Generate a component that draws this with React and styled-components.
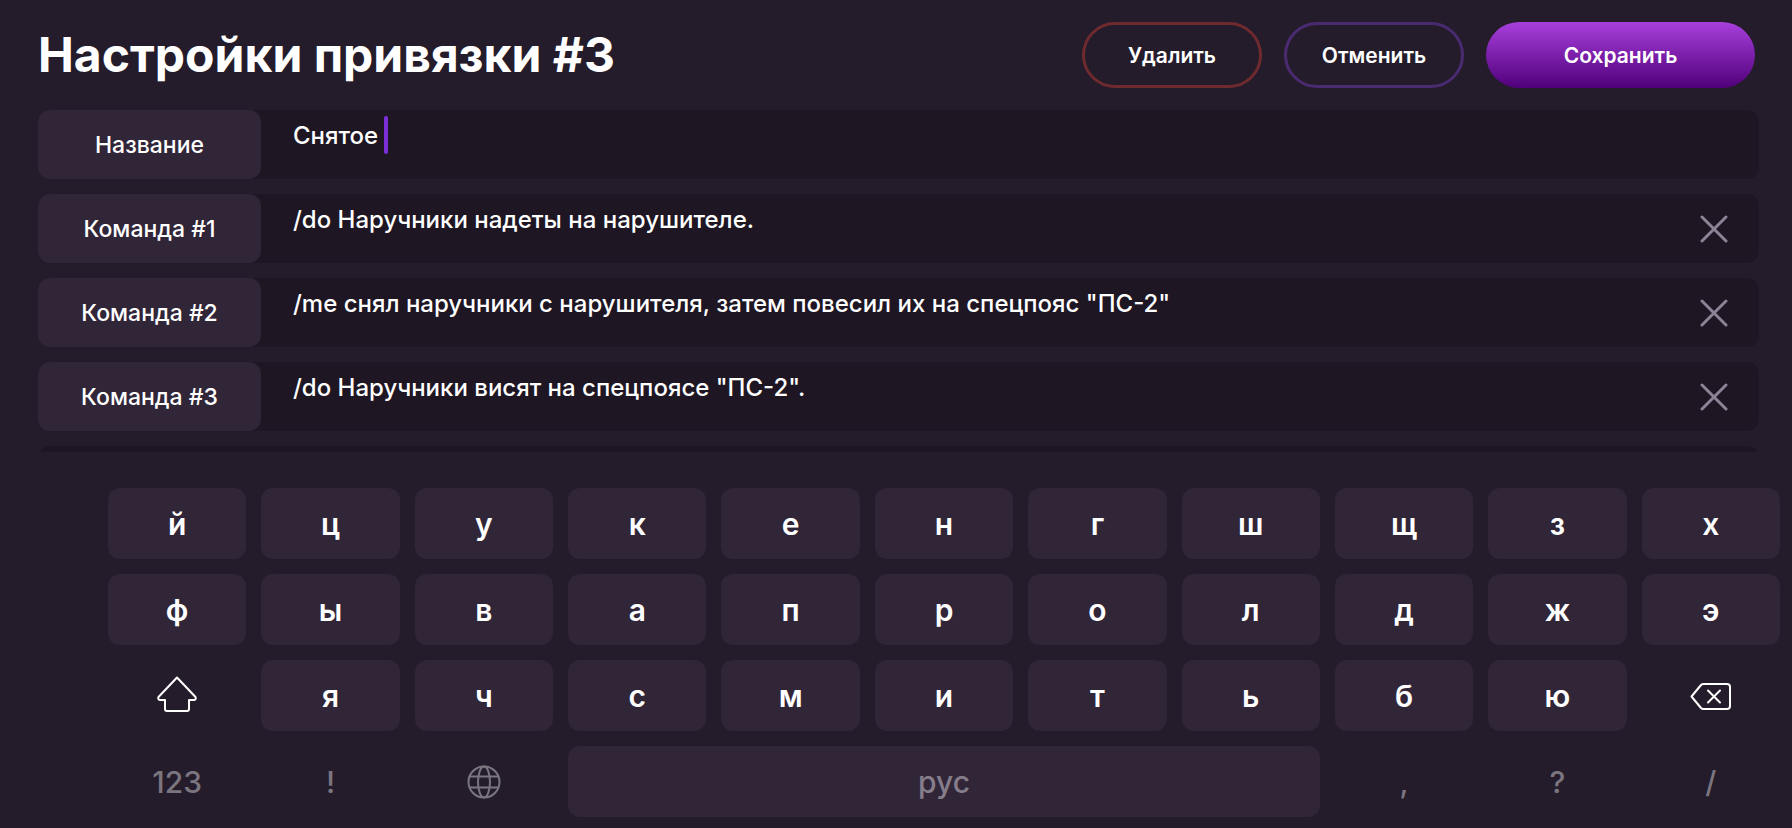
import { useState } from "react";
import styled, { createGlobalStyle } from "styled-components";

const fields = [
  { id: "name", label: "Название", value: "Снятое", active: true },
  { id: "command-1", label: "Команда #1", value: "/do Наручники надеты на нарушителе." },
  {
    id: "command-2",
    label: "Команда #2",
    value: '/me снял наручники с нарушителя, затем повесил их на спецпояс "ПС-2"',
  },
  { id: "command-3", label: "Команда #3", value: '/do Наручники висят на спецпоясе "ПС-2".' },
];

const letterRows = ["йцукенгшщзх", "фывапролджэ"];
const lastLetterRow = "ячсмитьбю";

const CloseIcon = () => (
  <svg width="28" height="28" viewBox="0 0 28 28" fill="none" stroke="currentColor" strokeWidth="3" strokeLinecap="round">
    <path d="M2 2 26 26M26 2 2 26" />
  </svg>
);

const ShiftIcon = () => (
  <svg width="40" height="40" viewBox="0 0 40 40" fill="none" stroke="currentColor" strokeWidth="2" strokeLinejoin="round">
    <path d="M20 1.500 1.500 21Q0.500 24 3.500 24H8V33Q8 35 10 35H30Q32 35 32 33V24H36.500Q39.500 24 38.500 21Z" />
  </svg>
);

const BackspaceIcon = () => (
  <svg width="42" height="28" viewBox="0 0 42 28" fill="none" stroke="currentColor" strokeWidth="2" strokeLinecap="round" strokeLinejoin="round">
    <path d="M13.500 2H37Q40 2 40 5V24Q40 27 37 27H13.500Q12 27 11 26L1.500 14.500 11 3Q12 2 13.500 2Z" />
    <path d="M18 8.500 30 20.500M30 8.500 18 20.500" />
  </svg>
);

const GlobeIcon = () => (
  <svg width="34" height="34" viewBox="0 0 34 34" fill="none" stroke="currentColor" strokeWidth="2">
    <circle cx="17" cy="17" r="15.500" />
    <ellipse cx="17" cy="17" rx="6" ry="15.500" />
    <path d="M3 11.500H31M3 22.500H31" />
  </svg>
);

const App = () => {
  const [values, setValues] = useState(fields.map((field) => field.value));

  const change = (index, value) =>
    setValues(values.map((item, i) => (i === index ? value : item)));

  return (
    <Page>
      <GlobalStyle />
      <Header>
        <Title>Настройки привязки #3</Title>
        <Actions>
          <OutlineButton type="button" $color="#6f2a30">
            Удалить
          </OutlineButton>
          <OutlineButton type="button" $color="#4a2a70">
            Отменить
          </OutlineButton>
          <SaveButton type="button">Сохранить</SaveButton>
        </Actions>
      </Header>

      <FieldList>
        {fields.map((field, index) => (
          <Field key={field.id}>
            <FieldLabel htmlFor={field.id}>{field.label}</FieldLabel>
            <FieldBody>
              <FieldInput
                id={field.id}
                type="text"
                value={values[index]}
                $active={field.active}
                onChange={(e) => change(index, e.target.value)}
              />
              {field.active && <Caret />}
            </FieldBody>
            {!field.active && (
              <RemoveButton type="button" aria-label="Удалить команду">
                <CloseIcon />
              </RemoveButton>
            )}
          </Field>
        ))}
        <Field />
      </FieldList>

      <Keyboard>
        {letterRows.map((row) =>
          [...row].map((letter) => (
            <Key type="button" key={letter}>
              {letter}
            </Key>
          ))
        )}
        <BareKey type="button" aria-label="Shift">
          <ShiftIcon />
        </BareKey>
        {[...lastLetterRow].map((letter) => (
          <Key type="button" key={letter}>
            {letter}
          </Key>
        ))}
        <BareKey type="button" aria-label="Backspace">
          <BackspaceIcon />
        </BareKey>
        <BareKey type="button" $muted>
          123
        </BareKey>
        <BareKey type="button" $muted>
          !
        </BareKey>
        <BareKey type="button" $muted aria-label="Язык">
          <GlobeIcon />
        </BareKey>
        <SpaceKey type="button">рус</SpaceKey>
        <BareKey type="button" $muted>
          ,
        </BareKey>
        <BareKey type="button" $muted>
          ?
        </BareKey>
        <BareKey type="button" $muted>
          /
        </BareKey>
      </Keyboard>
    </Page>
  );
};

export default App;

const GlobalStyle = createGlobalStyle`
  * {
    box-sizing: border-box;
    margin: 0;
    padding: 0;
  }
  body {
    background: #241c2a;
    color: #fff;
    font-family: Inter, "Open Sans", sans-serif;
  }
  button,
  input {
    border: none;
    background: none;
    color: inherit;
    font-family: inherit;
  }
  button {
    cursor: pointer;
  }
  svg {
    display: block;
  }
`;

const Page = styled.div`
  padding-bottom: 12px;
`;

const Header = styled.header`
  display: flex;
  align-items: center;
  justify-content: space-between;
  padding: 22px 37px 22px 38px;
`;

const Title = styled.h1`
  font-size: 48px;
  font-weight: 700;
  line-height: 66px;
`;

const Actions = styled.div`
  display: flex;
  gap: 22px;
`;

const ActionButton = styled.button`
  height: 66px;
  border-radius: 33px;
  font-size: 21px;
  font-weight: 600;
`;

const OutlineButton = styled(ActionButton)`
  width: 180px;
  border: 3px solid ${(props) => props.$color};
`;

const SaveButton = styled(ActionButton)`
  width: 269px;
  background: linear-gradient(#a83fdc, #50007a);
`;

const FieldList = styled.div`
  display: flex;
  flex-direction: column;
  gap: 15px;
  height: 342px;
  padding: 0 33px 0 38px;
  overflow: hidden;
`;

const Field = styled.div`
  display: flex;
  flex-shrink: 0;
  height: 69px;
  border-radius: 12px;
  background: #1e1623;
`;

const FieldLabel = styled.label`
  display: flex;
  align-items: center;
  justify-content: center;
  width: 223px;
  border-radius: 12px;
  background: #312538;
  font-size: 23px;
  font-weight: 500;
`;

const FieldBody = styled.div`
  display: flex;
  flex: 1;
  align-items: flex-start;
  gap: 6px;
  padding: 6px 0 0 32px;
`;

const FieldInput = styled.input`
  flex: ${(props) => (props.$active ? "none" : "1")};
  field-sizing: ${(props) => (props.$active ? "content" : "fixed")};
  height: 38px;
  font-size: 24px;
  font-weight: 500;
  outline: none;
`;

const Caret = styled.span`
  width: 4px;
  height: 38px;
  border-radius: 2px;
  background: #7b2fd8;
`;

const RemoveButton = styled.button`
  display: flex;
  align-items: center;
  padding: 0 31px;
  color: #8d8296;
`;

const Keyboard = styled.div`
  display: grid;
  grid-template-columns: repeat(11, 1fr);
  grid-auto-rows: 71px;
  gap: 15px;
  padding: 36px 12px 0 108px;
`;

const Key = styled.button`
  border-radius: 12px;
  background: #312538;
  font-size: 30px;
  font-weight: 600;
`;

const BareKey = styled.button`
  display: flex;
  align-items: center;
  justify-content: center;
  color: ${(props) => (props.$muted ? "#7b7580" : "#fff")};
  font-size: 30px;
  font-weight: 500;
`;

const SpaceKey = styled(Key)`
  grid-column: span 5;
  color: #857d8a;
  font-weight: 500;
`;
